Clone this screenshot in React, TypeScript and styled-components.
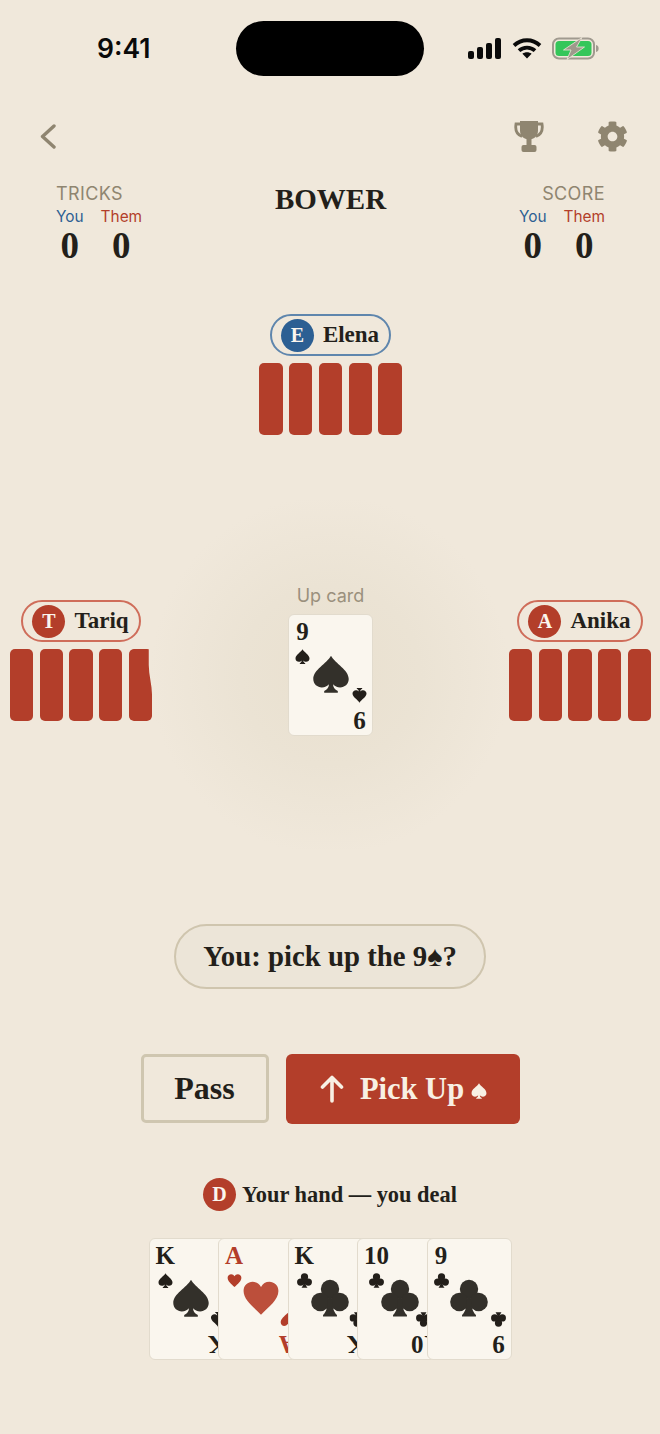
import React from "react";
import styled, { createGlobalStyle } from "styled-components";
import { FaCog } from "react-icons/fa";

const SERIF = `"Liberation Serif", "Times New Roman", serif`;
const SANS = `Inter, "Liberation Sans", sans-serif`;
const INK = "#231f1a";
const RED = "#b33e2a";
const BLUE = "#2c5f93";
const MUTED = "#8f8570";

const GlobalStyle = createGlobalStyle`
  html, body { margin: 0; padding: 0; background: #f0e8db; }
  * { box-sizing: border-box; }
`;

type Suit = "spade" | "heart" | "club";

const SuitIcon = ({ suit, size, color }: { suit: Suit; size: number; color: string }) => (
  <svg width={size} height={size} viewBox="0 0 24 24" fill={color} style={{ display: "block" }}>
    {suit === "spade" && (
      <path d="M12 .5C9.200 5.600 .8 9.300 .8 15.200c0 3.300 2.700 5.300 5.400 5.300 1.800 0 3.600-.7 4.500-2-.1 2.100-1 3.400-3 4.200v1.100h8.600v-1.100c-2-.8-2.900-2.100-3-4.200.9 1.300 2.700 2 4.500 2 2.700 0 5.400-2 5.400-5.300C23.200 9.300 14.800 5.600 12 .5z" />
    )}
    {suit === "heart" && (
      <path d="M12 22.500C7 17.500 1 13.200 1 7.600 1 4 3.800 1.800 6.700 1.800c2.300 0 4.200 1.200 5.300 3.200 1.100-2 3-3.200 5.300-3.200C20.200 1.800 23 4 23 7.600c0 5.600-6 9.900-11 14.900z" />
    )}
    {suit === "club" && (
      <>
        <circle cx="12" cy="6.300" r="5.800" />
        <circle cx="5.900" cy="14.500" r="5.800" />
        <circle cx="18.100" cy="14.500" r="5.800" />
        <path d="M10.800 11h2.400c0 5.500 1 9.800 3.200 11.700v1H7.600v-1c2.200-1.900 3.200-6.200 3.200-11.700z" />
      </>
    )}
  </svg>
);

const Page = styled.div`
  width: 660px;
  height: 1434px;
  overflow: hidden;
  background: #f0e8db;
  color: ${INK};
  font-family: ${SERIF};
  display: flex;
  flex-direction: column;
`;

const StatusBar = styled.div`
  height: 96px;
  padding-top: 21px;
  display: grid;
  grid-template-columns: 236px 188px 236px;
  align-items: start;
`;

const Clock = styled.div`
  font-family: ${SANS};
  font-size: 26.5px;
  font-weight: 600;
  line-height: 55px;
  padding-left: 97px;
  color: #0a0a0a;
`;

const Island = styled.div`
  height: 55px;
  border-radius: 28px;
  background: #000;
`;

const StatusIcons = styled.div`
  display: flex;
  align-items: center;
  height: 55px;
  padding-left: 44px;
  gap: 10px;
`;

const TopBar = styled.div`
  height: 80px;
  padding: 0 32px 0 40px;
  display: flex;
  align-items: center;
  color: ${MUTED};
`;

const TopActions = styled.div`
  margin-left: auto;
  display: flex;
  align-items: center;
  gap: 53px;
`;

const ScoreRow = styled.div`
  height: 106px;
  padding: 8px 55px 0 56px;
  display: grid;
  grid-template-columns: 1fr auto 1fr;
`;

const Tally = styled.div<{ $end?: boolean }>`
  display: flex;
  flex-direction: column;
  align-items: ${(p) => (p.$end ? "flex-end" : "flex-start")};
`;

const TallyTitle = styled.div`
  font-family: ${SANS};
  font-size: 18px;
  letter-spacing: 0.4px;
  line-height: 20px;
  color: ${MUTED};
`;

const TallyPairs = styled.div`
  display: flex;
  gap: 17px;
  margin-top: 3px;
`;

const TallyCol = styled.div`
  display: flex;
  flex-direction: column;
  align-items: center;
`;

const TallyName = styled.div<{ $color: string }>`
  font-family: ${SANS};
  font-size: 15.4px;
  line-height: 20px;
  color: ${(p) => p.$color};
`;

const TallyNum = styled.div`
  font-size: 37px;
  font-weight: 700;
  line-height: 38px;
`;

const Title = styled.div`
  font-size: 29px;
  font-weight: 700;
  line-height: 30px;
`;

const Seat = styled.div`
  display: flex;
  flex-direction: column;
  align-items: center;
  gap: 7px;
`;

const TopSeat = styled(Seat)`
  margin-top: 32px;
  padding-left: 1px;
`;

const Pill = styled.div<{ $color: string }>`
  height: 42px;
  padding: 0 10px 0 9px;
  border: 2px solid ${(p) => p.$color};
  border-radius: 21px;
  display: flex;
  align-items: center;
  gap: 9px;
  font-size: 23px;
  font-weight: 700;
`;

const Avatar = styled.div<{ $color: string }>`
  width: 33px;
  height: 33px;
  border-radius: 50%;
  background: ${(p) => p.$color};
  color: #fbf6ee;
  font-size: 20px;
  font-weight: 700;
  display: flex;
  align-items: center;
  justify-content: center;
  flex: none;
`;

const Pile = styled.div`
  display: flex;
  gap: 6.4px;
`;

const CardBack = styled.div<{ $torn?: boolean }>`
  width: 23.3px;
  height: 72px;
  border-radius: 5px;
  background: ${RED};
  ${(p) =>
    p.$torn
      ? "clip-path: path('M0 5Q0 0 5 0H20V16C20 26 23.3 36 23.3 46V67Q23.3 72 18.3 72H5Q0 72 0 67Z');"
      : ""}
`;

const Middle = styled.div`
  height: 350px;
  margin-top: 65px;
  padding: 0 9px 29px 10px;
  display: flex;
  align-items: center;
  justify-content: space-between;
  background: radial-gradient(circle 180px at center, #e9e0cf 0%, #ebe3d4 50%, #f0e8db 100%);
`;

const UpCardWrap = styled.div`
  display: flex;
  flex-direction: column;
  align-items: center;
  gap: 8px;
`;

const UpLabel = styled.div`
  font-family: ${SANS};
  font-size: 18px;
  line-height: 20px;
  color: #9a907d;
`;

const Face = styled.div<{ $overlap?: boolean }>`
  width: 85px;
  height: 122px;
  border-radius: 6px;
  background: #faf6ee;
  border: 1.5px solid #e2dbcd;
  display: grid;
  flex: none;
  overflow: hidden;
  isolation: isolate;
  margin-left: ${(p) => (p.$overlap ? "-15.5px" : "0")};
`;

const Corner = styled.div<{ $color: string; $flip?: boolean }>`
  grid-area: 1 / 1;
  justify-self: ${(p) => (p.$flip ? "end" : "start")};
  align-self: ${(p) => (p.$flip ? "end" : "start")};
  transform: ${(p) => (p.$flip ? "rotate(180deg)" : "none")};
  padding: ${(p) => (p.$flip ? "1px 0 0 5px" : "3px 0 0 6px")};
  display: flex;
  flex-direction: column;
  align-items: center;
  gap: 3px;
  color: ${(p) => p.$color};
  font-size: 25px;
  font-weight: 700;
  line-height: 28px;
`;

const Pip = styled.div`
  grid-area: 1 / 1;
  place-self: center;
  margin: 0 0 2px;
`;

const Prompt = styled.div`
  align-self: center;
  width: 312px;
  height: 65px;
  margin-top: 74px;
  border: 2px solid #cfc5ae;
  border-radius: 33px;
  background: #ece5d8;
  display: flex;
  align-items: center;
  justify-content: center;
  font-size: 28.8px;
  font-weight: 700;
`;

const Actions = styled.div`
  margin-top: 65px;
  display: flex;
  justify-content: center;
  gap: 17px;
`;

const PassButton = styled.button`
  width: 128px;
  height: 69px;
  border: 3px solid #cfc6b0;
  border-radius: 5px;
  background: transparent;
  color: ${INK};
  font-family: ${SERIF};
  font-size: 32px;
  font-weight: 700;
`;

const PickButton = styled.button`
  width: 234px;
  height: 70px;
  padding: 0 0 0 2px;
  border: none;
  border-radius: 6px;
  background: ${RED};
  color: #f8f0e4;
  font-family: ${SERIF};
  font-size: 30.5px;
  font-weight: 700;
  display: flex;
  align-items: center;
  justify-content: center;
  gap: 16px;
`;

const PickSuit = styled.span`
  margin: 4px 0 0 -9px;
`;

const HandLabel = styled.div`
  margin-top: 54px;
  display: flex;
  align-items: center;
  justify-content: center;
  gap: 6px;
  font-size: 22.4px;
  font-weight: 700;
  height: 33px;
`;

const Hand = styled.div`
  margin-top: 27px;
  display: flex;
  justify-content: center;
`;

type CardData = { rank: string; suit: Suit };

const CardFace = ({ rank, suit, overlap }: CardData & { overlap?: boolean }) => {
  const color = suit === "heart" ? RED : INK;
  const pipColor = suit === "heart" ? "#bc4f3b" : "#33302a";
  const corner = (flip?: boolean) => (
    <Corner $color={color} $flip={flip}>
      <span>{rank}</span>
      <SuitIcon suit={suit} size={15} color={color} />
    </Corner>
  );
  return (
    <Face $overlap={overlap}>
      {corner()}
      <Pip>
        <SuitIcon suit={suit} size={38} color={pipColor} />
      </Pip>
      {corner(true)}
    </Face>
  );
};

const Opponent = ({ name, color, torn }: { name: string; color: string; torn?: boolean }) => (
  <Seat>
    <Pill $color={color === RED ? "#cf6d5a" : "#5f86ad"}>
      <Avatar $color={color}>{name[0]}</Avatar>
      {name}
    </Pill>
    <Pile>
      {[0, 1, 2, 3, 4].map((i) => (
        <CardBack key={i} $torn={torn && i === 4} />
      ))}
    </Pile>
  </Seat>
);

const TallyBlock = ({ title, end }: { title: string; end?: boolean }) => (
  <Tally $end={end}>
    <TallyTitle>{title}</TallyTitle>
    <TallyPairs>
      <TallyCol>
        <TallyName $color={BLUE}>You</TallyName>
        <TallyNum>0</TallyNum>
      </TallyCol>
      <TallyCol>
        <TallyName $color={RED}>Them</TallyName>
        <TallyNum>0</TallyNum>
      </TallyCol>
    </TallyPairs>
  </Tally>
);

const hand: CardData[] = [
  { rank: "K", suit: "spade" },
  { rank: "A", suit: "heart" },
  { rank: "K", suit: "club" },
  { rank: "10", suit: "club" },
  { rank: "9", suit: "club" },
];

export default function App() {
  return (
    <Page>
      <GlobalStyle />
      <StatusBar>
        <Clock>9:41</Clock>
        <Island />
        <StatusIcons>
          <svg width="34" height="21" viewBox="0 0 34 21" fill="#0a0a0a">
            <rect x="0" y="13" width="6" height="8" rx="2" />
            <rect x="9" y="9" width="6" height="12" rx="2" />
            <rect x="18" y="5" width="6" height="16" rx="2" />
            <rect x="27" y="0" width="6" height="21" rx="2" />
          </svg>
          <svg width="30" height="21" viewBox="0 0 30 21" fill="none" stroke="#0a0a0a" strokeWidth="3.8">
            <path d="M2 7.5C9.500 .5 20.500 .5 28 7.5" />
            <path d="M7 12.700C11.500 8.500 18.500 8.500 23 12.700" />
            <path d="M15 20.500l-4.600-4.800c2.500-2 6.700-2 9.200 0z" fill="#0a0a0a" stroke="none" />
          </svg>
          <svg width="47" height="23" viewBox="0 0 47 23" fill="none">
            <rect x="1" y="1.5" width="41" height="20" rx="6" stroke="#a09a8f" strokeWidth="2" />
            <rect x="3.5" y="4" width="36" height="15" rx="3.5" fill="#35c65a" />
            <path d="M44 8c2 .5 2.600 1.800 2.600 3.500S46 14.500 44 15z" fill="#a09a8f" />
            <path d="M30 .5L11.500 13H19l-4 9.500L32.500 10H24.500z" fill="#9f998c" stroke="#f0e8db" strokeWidth="0.8" />
          </svg>
        </StatusIcons>
      </StatusBar>
      <TopBar>
        <svg width="16" height="25" viewBox="0 0 16 25" fill="none" stroke="currentColor" strokeWidth="3.4" strokeLinecap="round" strokeLinejoin="round">
          <path d="M14 2L2.500 12.500 14 23" />
        </svg>
        <TopActions>
          <svg width="30" height="32" viewBox="0 0 30 32" fill="currentColor">
            <path d="M6 1h18v9.500c0 5.300-3.700 9-9 9s-9-3.700-9-9z" />
            <path d="M6 4H2c-1 6 .5 10.500 6 12.500M24 4h4c1 6-.5 10.500-6 12.500" fill="none" stroke="currentColor" strokeWidth="2.8" />
            <rect x="12.5" y="18" width="5" height="9" />
            <rect x="7.5" y="25" width="15" height="7" rx="2" />
          </svg>
          <FaCog size={31} />
        </TopActions>
      </TopBar>
      <ScoreRow>
        <TallyBlock title="TRICKS" />
        <Title>BOWER</Title>
        <Tally $end>
          <TallyBlock title="SCORE" end />
        </Tally>
      </ScoreRow>
      <TopSeat>
        <Opponent name="Elena" color={BLUE} />
      </TopSeat>
      <Middle>
        <Opponent name="Tariq" color={RED} torn />
        <UpCardWrap>
          <UpLabel>Up card</UpLabel>
          <CardFace rank="9" suit="spade" />
        </UpCardWrap>
        <Opponent name="Anika" color={RED} />
      </Middle>
      <Prompt>You: pick up the 9♠?</Prompt>
      <Actions>
        <PassButton>Pass</PassButton>
        <PickButton>
          <svg width="24" height="28" viewBox="0 0 24 28" fill="none" stroke="currentColor" strokeWidth="3.6" strokeLinecap="round" strokeLinejoin="round">
            <path d="M12 26V2.500M2.500 12L12 2.500 21.500 12" />
          </svg>
          Pick Up
          <PickSuit>
            <SuitIcon suit="spade" size={16} color="#f8f0e4" />
          </PickSuit>
        </PickButton>
      </Actions>
      <HandLabel>
        <Avatar $color={RED}>D</Avatar>
        Your hand — you deal
      </HandLabel>
      <Hand>
        {hand.map((c, i) => (
          <CardFace key={i} rank={c.rank} suit={c.suit} overlap={i > 0} />
        ))}
      </Hand>
    </Page>
  );
}
